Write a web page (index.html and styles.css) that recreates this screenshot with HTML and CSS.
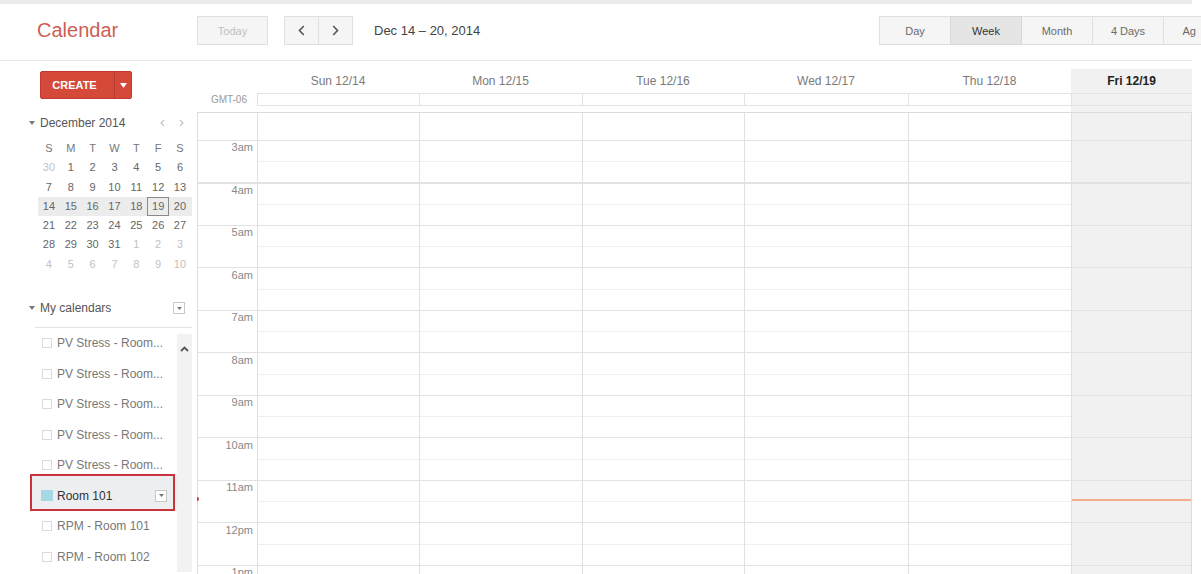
FILE: index.html
```html
<!DOCTYPE html>
<html lang="en">
<head>
    <meta charset="UTF-8">
    <title>Calendar</title>
    <link rel="stylesheet" href="styles.css">
</head>
<body>

    <header class="topbar">
        <div class="logo">Calendar</div>
        <button class="btn btn-today">Today</button>
        <div class="nav">
            <button class="btn"><svg width="7" height="11" viewBox="0 0 7 11"><path d="M5.8 1 L1.5 5.5 L5.8 10" fill="none" stroke="#555" stroke-width="1.6"/></svg></button>
            <button class="btn"><svg width="7" height="11" viewBox="0 0 7 11"><path d="M1.2 1 L5.5 5.5 L1.2 10" fill="none" stroke="#555" stroke-width="1.6"/></svg></button>
        </div>
        <div class="range">Dec 14 &ndash; 20, 2014</div>
        <div class="views">
            <button class="btn">Day</button>
            <button class="btn active">Week</button>
            <button class="btn">Month</button>
            <button class="btn">4 Days</button>
            <button class="btn btn-agenda">Ag</button>
        </div>
    </header>

    <div class="main">
        <aside class="sidebar">
            <div class="create">
                <span class="create-label">CREATE</span>
                <span class="create-drop"><svg width="7" height="5" viewBox="0 0 7 5"><path d="M0 0 H7 L3.5 5 Z" fill="#fff"/></svg></span>
            </div>

            <div class="minical-head">
                <svg class="caret" width="6" height="4" viewBox="0 0 6 4"><path d="M0 0 H6 L3 4 Z" fill="#777"/></svg>
                <span>December 2014</span>
                <span class="minical-nav">
                    <svg width="5" height="8" viewBox="0 0 5 8"><path d="M4 1 L1 4 L4 7" fill="none" stroke="#c4c4c4" stroke-width="1.2"/></svg>
                    <svg width="5" height="8" viewBox="0 0 5 8"><path d="M1 1 L4 4 L1 7" fill="none" stroke="#c4c4c4" stroke-width="1.2"/></svg>
                </span>
            </div>
            <div class="minical" id="minical"></div>

            <div class="section-head">
                <svg class="caret" width="6" height="4" viewBox="0 0 6 4"><path d="M0 0 H6 L3 4 Z" fill="#777"/></svg>
                <span>My calendars</span>
                <span class="menu-box"><svg width="5" height="3" viewBox="0 0 5 3"><path d="M0 0 H5 L2.5 3 Z" fill="#777"/></svg></span>
            </div>
            <div class="divider"></div>

            <div class="list-wrap">
                <ul class="cal-list">
                    <li><span class="check"></span><span class="cal-name">PV Stress - Room...</span></li>
                    <li><span class="check"></span><span class="cal-name">PV Stress - Room...</span></li>
                    <li><span class="check"></span><span class="cal-name">PV Stress - Room...</span></li>
                    <li><span class="check"></span><span class="cal-name">PV Stress - Room...</span></li>
                    <li><span class="check"></span><span class="cal-name">PV Stress - Room...</span></li>
                    <li class="selected"><span class="swatch"></span><span class="cal-name">Room 101</span>
                        <span class="menu-box"><svg width="5" height="3" viewBox="0 0 5 3"><path d="M0 0 H5 L2.5 3 Z" fill="#777"/></svg></span></li>
                    <li><span class="check"></span><span class="cal-name">RPM - Room 101</span></li>
                    <li><span class="check"></span><span class="cal-name">RPM - Room 102</span></li>
                </ul>
                <div class="scroll-strip">
                    <svg width="9" height="6" viewBox="0 0 9 6"><path d="M1 5 L4.5 1.5 L8 5" fill="none" stroke="#555" stroke-width="1.8"/></svg>
                </div>
            </div>
        </aside>

        <section class="cal">
            <div class="cal-head" id="calHead"></div>
            <div class="cal-body" id="calBody"></div>
        </section>
    </div>

    <script>
        const days = ['Sun 12/14', 'Mon 12/15', 'Tue 12/16', 'Wed 12/17', 'Thu 12/18', 'Fri 12/19'];
        const hours = ['3am', '4am', '5am', '6am', '7am', '8am', '9am', '10am', '11am', '12pm', '1pm'];

        // week header + all-day strip
        document.getElementById('calHead').innerHTML =
            '<div class="head-cell"><div class="head-label"></div><div class="gmt">GMT-06</div></div>' +
            days.map((d, i) => `
                <div class="head-cell${i === 5 ? ' today' : ''}">
                    <div class="head-label">${d}</div>
                    <div class="allday"></div>
                </div>`).join('');

        // time gutter and day columns
        document.getElementById('calBody').innerHTML =
            '<div class="gutter">' + hours.map(h => `<div class="hour-label">${h}</div>`).join('') +
            '<span class="now-dot"></span></div>' +
            days.map((d, i) => i === 5
                ? '<div class="day today"><div class="now-line"></div></div>'
                : '<div class="day"></div>').join('');

        // mini month, Sunday first
        const weeks = [
            [[30, 'out'], 1, 2, 3, 4, 5, 6],
            [7, 8, 9, 10, 11, 12, 13],
            [14, 15, 16, 17, 18, [19, 'today'], 20],
            [21, 22, 23, 24, 25, 26, 27],
            [28, 29, 30, 31, [1, 'out'], [2, 'out'], [3, 'out']],
            [[4, 'out'], [5, 'out'], [6, 'out'], [7, 'out'], [8, 'out'], [9, 'out'], [10, 'out']]
        ];
        document.getElementById('minical').innerHTML =
            '<div class="mc-row dow">' + ['S', 'M', 'T', 'W', 'T', 'F', 'S'].map(d => `<span>${d}</span>`).join('') + '</div>' +
            weeks.map((w, i) => `<div class="mc-row${i === 2 ? ' week' : ''}">` +
                w.map(c => Array.isArray(c) ? `<span class="${c[1]}">${c[0]}</span>` : `<span>${c}</span>`).join('') +
                '</div>').join('');
    </script>
</body>
</html>
```

FILE: styles.css
```css
body { margin: 0; width: 1201px; height: 574px; overflow: hidden; background: #fff; color: #444; font-family: "Liberation Sans", Arial, sans-serif; }

/* top bar */
.topbar { display: flex; align-items: flex-start; width: 1192px; height: 61px; box-sizing: border-box; padding: 12px 0 0 37px; border-top: 4px solid #ececec; border-bottom: 1px solid #e8e8e8; }
.topbar > * { flex-shrink: 0; }
.logo { width: 160px; font-size: 20px; line-height: 29px; color: #cc5f54; }
.btn { height: 29px; box-sizing: border-box; padding: 0; border: 1px solid #e0e0e0; background: #f5f5f5; font: 11px "Liberation Sans", Arial, sans-serif; color: #6a6a6a; display: flex; align-items: center; justify-content: center; }
.btn-today { width: 71px; margin-right: 16px; color: #c0c0c0; }
.nav { display: flex; }
.nav .btn { width: 35px; }
.nav .btn + .btn { margin-left: -1px; }
.range { margin-left: 21px; font-size: 13px; line-height: 29px; color: #444; }
.views { display: flex; margin-left: auto; margin-right: -9px; }
.views .btn { width: 72px; margin-left: -1px; }
.views .btn-agenda { width: 38px; justify-content: flex-end; padding-right: 5px; border-right: 0; }
.views .btn.active { background: #e5e5e5; border-color: #d8d8d8; color: #333; position: relative; }

.main { display: flex; height: 513px; }

/* left column */
.sidebar { width: 192px; flex-shrink: 0; padding-top: 10px; box-sizing: border-box; font-size: 12px; }
.create { display: flex; width: 92px; height: 28px; margin-left: 40px; box-sizing: border-box; border: 1px solid #c23a2c; border-radius: 2px; background: #d5493a; color: #fff; font-size: 11px; font-weight: bold; }
.create-label { width: 74px; padding-right: 6px; box-sizing: border-box; line-height: 26px; text-align: center; border-right: 1px solid #b93a2d; }
.create-drop { flex: 1; display: flex; align-items: center; justify-content: center; }

.caret { margin-right: 5px; }
.minical-head { display: flex; align-items: center; height: 16px; margin-top: 16px; padding-left: 29px; color: #555; }
.minical-nav { display: flex; gap: 14px; margin-left: auto; padding-right: 8px; }
.minical { margin: 8px 0 0 38px; font-size: 11px; }
.mc-row { display: flex; height: 19.3px; }
.mc-row span { width: 21.85px; box-sizing: border-box; text-align: center; line-height: 19px; color: #666; }
.mc-row.dow span { color: #777; }
.mc-row.week { background: #ececec; }
.mc-row span.out { color: #c2c2c2; }
.mc-row span.today { border: 1px solid #8a8a8a; line-height: 17px; }

.section-head { display: flex; align-items: center; height: 16px; margin-top: 26px; padding-left: 29px; color: #555; }
.menu-box { display: flex; align-items: center; justify-content: center; width: 12px; height: 12px; box-sizing: border-box; border: 1px solid #c8c8c8; background: #fff; margin-left: auto; margin-right: 7px; }
.divider { margin: 11px 0 0 35px; border-top: 1px solid #e3e3e3; }

.list-wrap { display: flex; }
.cal-list { list-style: none; margin: 0 0 0 30px; padding: 0; width: 147px; }
.cal-list li { display: flex; align-items: center; height: 30.5px; padding-left: 12px; color: #777; white-space: nowrap; }
.check { width: 10px; height: 10px; box-sizing: border-box; border: 1px solid #dadada; margin-right: 5px; flex-shrink: 0; }
.cal-list li.selected { position: relative; background: #eceef0; box-shadow: 0 -7px 0 #eceef0; color: #333; }
.cal-list li.selected::after { content: ''; position: absolute; left: 0; right: 2px; top: -7px; bottom: 0; border: 2px solid #c8333c; }
.cal-list li.selected .menu-box { margin-right: 10px; }
.swatch { width: 12px; height: 11px; margin: 0 4px 0 -1px; background: #a6d7e4; flex-shrink: 0; }
.scroll-strip { width: 15px; margin-top: 6px; padding-top: 12px; background: #f2f2f2; display: flex; justify-content: center; align-items: flex-start; }

/* week grid */
.cal { width: 995px; margin-left: 5px; flex-shrink: 0; }
.cal-head, .cal-body { display: grid; grid-template-columns: 60px 162px 163px 162px 164px 163px 121px; }
.cal-head { padding-top: 8px; }
.head-cell { padding-bottom: 6px; }
.head-cell.today { background: #f1f1f1; }
.head-label { height: 24px; line-height: 24px; text-align: center; font-size: 12px; color: #7a7a7a; }
.head-cell.today .head-label { font-weight: bold; color: #222; }
.gmt { height: 13px; line-height: 13px; padding-right: 10px; text-align: right; font-size: 10px; color: #999; }
.allday { height: 11px; border: 1px solid #e2e2e2; border-right: 0; }

.cal-body { height: 462px; border-top: 1px solid #dcdcdc; overflow: hidden; }
.gutter, .day { background-repeat: no-repeat; background-position: 0 27px; }
.gutter { position: relative; padding-top: 27px; border-left: 1px solid #dedede; background-image: repeating-linear-gradient(to bottom, #e2e2e2 0 1px, transparent 1px 42.5px); }
.hour-label { height: 42.5px; box-sizing: border-box; padding: 1px 4px 0 0; text-align: right; font-size: 11px; line-height: 13px; color: #888; }
.now-dot { position: absolute; left: -2px; top: 384px; width: 3px; height: 4px; border-radius: 50%; background: #c44; }
.day { border-left: 1px solid #e0e0e0;
    background-image: repeating-linear-gradient(to bottom, #e2e2e2 0 1px, transparent 1px 42.5px),
                      repeating-linear-gradient(to bottom, transparent 0 21.25px, #efefef 21.25px 22.25px, transparent 22.25px 42.5px); }
.day.today { position: relative; background-color: #f1f1f1; border-right: 1px solid #dcdcdc; }
.now-line { position: absolute; left: 0; right: 0; top: 386px; height: 2px; background: #f5ad8b; }
```
